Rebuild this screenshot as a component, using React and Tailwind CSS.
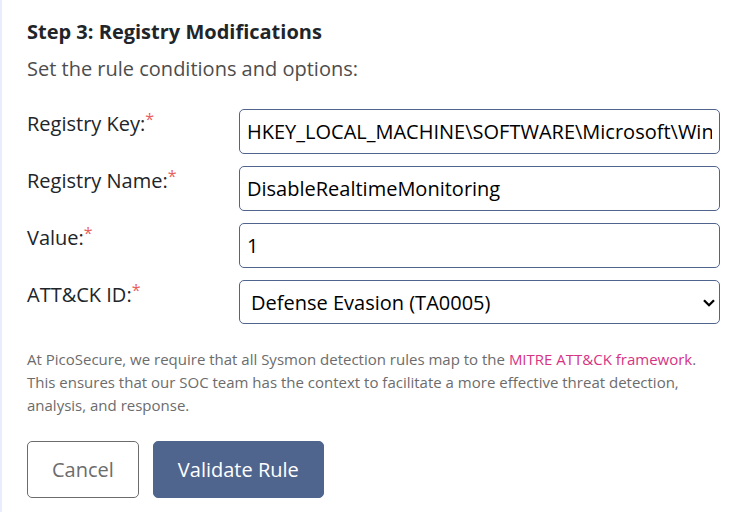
const controlClass =
  "w-full rounded-[5px] border border-[#50658e] bg-white text-[20px] leading-[30px] text-black outline-none";
const inputClass = `${controlClass} h-[45px] px-[7px]`;
const selectClass = `${controlClass} block h-11 appearance-none pt-0.5 pr-8 pl-[11px]`;

function Field({ id, label, children }) {
  return (
    <div className="flex">
      <label htmlFor={id} className="w-[212px] shrink-0 text-[20px] leading-[30px] text-[#212529]">
        {label}
        <sup className="-top-[6px] text-[16px] text-[#e9605f]">*</sup>
      </label>
      <div className="min-w-0 flex-1">{children}</div>
    </div>
  );
}

export default function App() {
  return (
    <main className="min-h-screen border-l-2 border-[#e9edfb] bg-white pt-[17px] pr-3 pl-[25px] font-['Open_Sans',sans-serif]">
      <h1 className="text-[20px] leading-[30px] font-bold text-[#212529]">Step 3: Registry Modifications</h1>
      <p className="mt-[7px] text-[20px] leading-[30px] text-[#4d4d4d]">Set the rule conditions and options:</p>
      <form className="mt-[25px]" onSubmit={(e) => e.preventDefault()}>
        <div className="flex flex-col gap-3">
          <Field id="key" label="Registry Key:">
            <input
              id="key"
              className={inputClass}
              defaultValue="HKEY_LOCAL_MACHINE\SOFTWARE\Microsoft\Windows Defender"
            />
          </Field>
          <Field id="name" label="Registry Name:">
            <input id="name" className={inputClass} defaultValue="DisableRealtimeMonitoring" />
          </Field>
          <Field id="value" label="Value:">
            <input id="value" className={inputClass} defaultValue="1" />
          </Field>
          <Field id="attack" label="ATT&CK ID:">
            <div className="relative">
              <select id="attack" className={selectClass} defaultValue="TA0005">
                <option value="TA0005">Defense Evasion (TA0005)</option>
              </select>
              <svg
                viewBox="0 0 12 8"
                className="pointer-events-none absolute top-[19px] right-[5px] h-2 w-3"
                fill="none"
                stroke="black"
                strokeWidth="2.3"
                aria-hidden="true"
              >
                <path d="M1 1.2 L6 6.2 L11 1.2" />
              </svg>
            </div>
          </Field>
        </div>
        <p className="mt-6 text-[15px] leading-[23px] text-[#6c6c6c]">
          At PicoSecure, we require that all Sysmon detection rules map to the{" "}
          <a href="#mitre" className="text-[#d63384]">MITRE ATT&CK framework</a>. This ensures that our SOC
          team has the context to facilitate a more effective threat detection, analysis, and response.
        </p>
        <div className="mt-6 flex gap-3.5">
          <button type="button" className="h-[57px] rounded-[5px] border border-[#6c6c6c] bg-white px-6 text-[20px] leading-[30px] text-[#6c6c6c]">
            Cancel
          </button>
          <button type="submit" className="h-[57px] rounded-[5px] border border-[#50658e] bg-[#50658e] px-6 text-[20px] leading-[30px] text-white">
            Validate Rule
          </button>
        </div>
      </form>
    </main>
  );
}
